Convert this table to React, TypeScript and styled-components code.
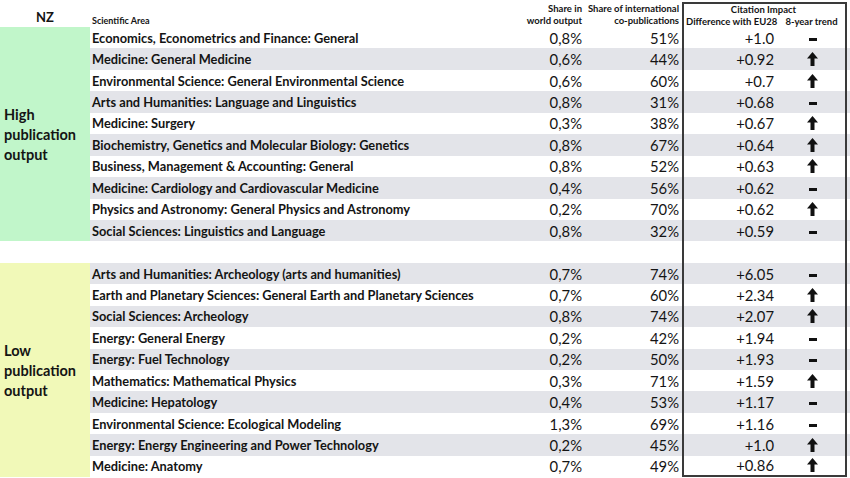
import React from "react";
import styled, { createGlobalStyle } from "styled-components";

const Global = createGlobalStyle`
  html, body { margin: 0; padding: 0; background: #ffffff; }
  body { font-family: Lato, "Open Sans", sans-serif; color: #141414; overflow: hidden; }
`;

const ROW_H = 21.45;
const BORDER = "2px solid #3a3a3a";
const COLS = "1fr 65px 97px 98px 67px 3px";

const Table = styled.div`
  width: 850px;
  height: 478px;
  display: flex;
  flex-direction: column;
`;

const HeaderRow = styled.div`
  height: 27px;
  display: grid;
  grid-template-columns: 90px ${COLS};
  align-items: end;
  font-weight: 700;
`;

const NZ = styled.div`
  align-self: start;
  padding-top: 9px;
  text-align: center;
  font-size: 13px;
  line-height: 16px;
`;

const AreaHead = styled.div`
  font-size: 9px;
  line-height: 11px;
  padding-left: 2px;
  padding-bottom: 2px;
`;

const NumHead = styled.div`
  font-size: 9.5px;
  line-height: 12px;
  text-align: right;
  padding-right: 3px;
  padding-bottom: 1px;
  white-space: nowrap;
`;

const CitationHead = styled.div`
  grid-column: span 2;
  align-self: stretch;
  margin-top: 2px;
  border-top: ${BORDER};
  border-left: ${BORDER};
  border-right: ${BORDER};
  display: grid;
  grid-template-columns: 96px 63px;
  grid-template-rows: 12px 12px;
  font-size: 9.5px;
  line-height: 12px;
  white-space: nowrap;
`;

const CitationTitle = styled.div`
  grid-column: span 2;
  text-align: center;
`;

const SubHead = styled.div<{ $align: "left" | "center" }>`
  text-align: ${(p) => p.$align};
  padding-left: ${(p) => (p.$align === "left" ? "2px" : "0")};
`;

const Section = styled.div`
  display: flex;
`;

const GroupLabel = styled.div<{ $bg: string }>`
  width: 90px;
  flex: none;
  background: ${(p) => p.$bg};
  display: flex;
  align-items: center;
  padding-left: 4px;
  padding-top: 2px;
  box-sizing: border-box;
  font-weight: 700;
  font-size: 14.5px;
  line-height: 20px;
`;

const Rows = styled.div`
  flex: 1;
  display: flex;
  flex-direction: column;
`;

const Row = styled.div<{ $striped: boolean }>`
  height: ${ROW_H}px;
  display: grid;
  grid-template-columns: ${COLS};
  align-items: stretch;
  background: ${(p) => (p.$striped ? "#e3e4e9" : "#ffffff")};
`;

const BlankRow = styled.div`
  height: ${ROW_H}px;
  display: grid;
  grid-template-columns: 90px ${COLS};
  background: #ffffff;
`;

const Cell = styled.div`
  display: flex;
  align-items: center;
  box-sizing: border-box;
  white-space: nowrap;
`;

const AreaCell = styled(Cell)`
  padding-left: 2px;
  font-weight: 700;
  font-size: 12.8px;
`;

const NumCell = styled(Cell)<{ $pad: number }>`
  justify-content: flex-end;
  padding-right: ${(p) => p.$pad}px;
  font-size: 14.8px;
`;

const DiffCell = styled(NumCell)<{ $last?: boolean }>`
  border-left: ${BORDER};
  border-bottom: ${(p) => (p.$last ? BORDER : "none")};
`;

const TrendCell = styled(Cell)<{ $last?: boolean }>`
  justify-content: center;
  border-right: ${BORDER};
  border-bottom: ${(p) => (p.$last ? BORDER : "none")};
`;

const Dash = styled.span`
  display: block;
  width: 8px;
  height: 3px;
  background: #111;
  margin-top: 3px;
`;

const Arrow = () => (
  <svg width="11" height="14" viewBox="0 0 11 14">
    <path d="M5.5 0 L11 6.5 L7.5 6.5 L7.5 14 L3.5 14 L3.5 6.5 L0 6.5 Z" fill="#111" />
  </svg>
);

type Item = [string, string, string, string, "up" | "flat"];

const high: Item[] = [
  ["Economics, Econometrics and Finance: General", "0,8%", "51%", "+1.0", "flat"],
  ["Medicine: General Medicine", "0,6%", "44%", "+0.92", "up"],
  ["Environmental Science: General Environmental Science", "0,6%", "60%", "+0.7", "up"],
  ["Arts and Humanities: Language and Linguistics", "0,8%", "31%", "+0.68", "flat"],
  ["Medicine: Surgery", "0,3%", "38%", "+0.67", "up"],
  ["Biochemistry, Genetics and Molecular Biology: Genetics", "0,8%", "67%", "+0.64", "up"],
  ["Business, Management & Accounting: General", "0,8%", "52%", "+0.63", "up"],
  ["Medicine: Cardiology and Cardiovascular Medicine", "0,4%", "56%", "+0.62", "flat"],
  ["Physics and Astronomy: General Physics and Astronomy", "0,2%", "70%", "+0.62", "up"],
  ["Social Sciences: Linguistics and Language", "0,8%", "32%", "+0.59", "flat"],
];

const low: Item[] = [
  ["Arts and Humanities: Archeology (arts and humanities)", "0,7%", "74%", "+6.05", "flat"],
  ["Earth and Planetary Sciences: General Earth and Planetary Sciences", "0,7%", "60%", "+2.34", "up"],
  ["Social Sciences: Archeology", "0,8%", "74%", "+2.07", "up"],
  ["Energy: General Energy", "0,2%", "42%", "+1.94", "flat"],
  ["Energy: Fuel Technology", "0,2%", "50%", "+1.93", "flat"],
  ["Mathematics: Mathematical Physics", "0,3%", "71%", "+1.59", "up"],
  ["Medicine: Hepatology", "0,4%", "53%", "+1.17", "flat"],
  ["Environmental Science: Ecological Modeling", "1,3%", "69%", "+1.16", "flat"],
  ["Energy: Energy Engineering and Power Technology", "0,2%", "45%", "+1.0", "up"],
  ["Medicine: Anatomy", "0,7%", "49%", "+0.86", "up"],
];

const DataRows = ({ items, last }: { items: Item[]; last?: boolean }) => (
  <Rows>
    {items.map(([area, world, intl, diff, trend], i) => {
      const isLast = !!last && i === items.length - 1;
      return (
        <Row key={area} $striped={i % 2 === 1 ? !last : !!last}>
          <AreaCell>{area}</AreaCell>
          <NumCell $pad={3}>{world}</NumCell>
          <NumCell $pad={3}>{intl}</NumCell>
          <DiffCell $pad={6} $last={isLast}>{diff}</DiffCell>
          <TrendCell $last={isLast}>{trend === "up" ? <Arrow /> : <Dash />}</TrendCell>
          <Cell />
        </Row>
      );
    })}
  </Rows>
);

export default function App() {
  return (
    <>
      <Global />
      <Table>
        <HeaderRow>
          <NZ>NZ</NZ>
          <AreaHead>Scientific Area</AreaHead>
          <NumHead>
            Share in
            <br />
            world output
          </NumHead>
          <NumHead>
            Share of international
            <br />
            co-publications
          </NumHead>
          <CitationHead>
            <CitationTitle>Citation Impact</CitationTitle>
            <SubHead $align="left">Difference with EU28</SubHead>
            <SubHead $align="center">8-year trend</SubHead>
          </CitationHead>
          <div />
        </HeaderRow>
        <Section>
          <GroupLabel $bg="#c1f6ca">
            High
            <br />
            publication
            <br />
            output
          </GroupLabel>
          <DataRows items={high} />
        </Section>
        <BlankRow>
          <Cell />
          <Cell />
          <Cell />
          <Cell />
          <DiffCell $pad={0} />
          <TrendCell />
          <Cell />
        </BlankRow>
        <Section>
          <GroupLabel $bg="#f1f9b8">
            Low
            <br />
            publication
            <br />
            output
          </GroupLabel>
          <DataRows items={low} last />
        </Section>
      </Table>
    </>
  );
}
